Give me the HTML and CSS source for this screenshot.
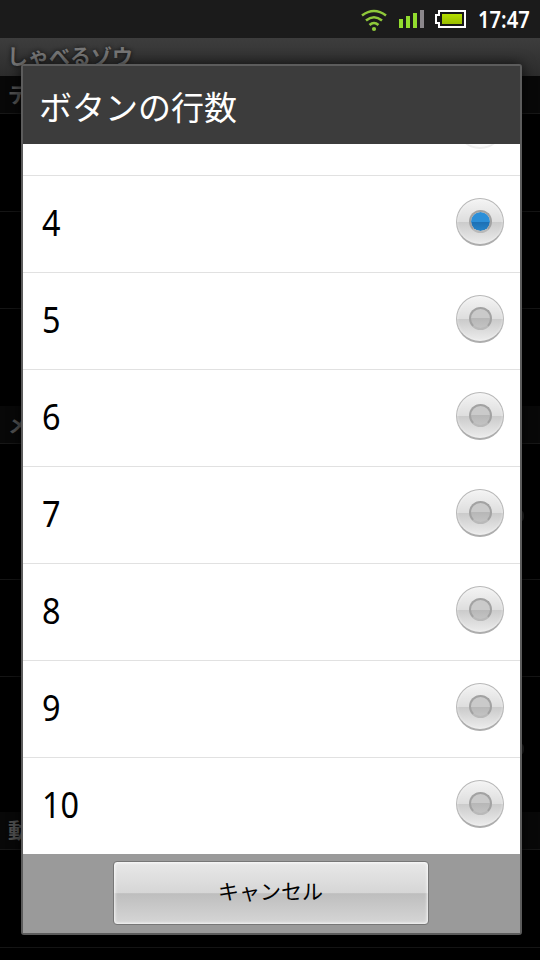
FILE: index.html
```html
<!DOCTYPE html>
<html lang="ja">
<head>
<meta charset="utf-8">
<title>しゃべるゾウ</title>
<link rel="stylesheet" href="styles.css">
</head>
<body>
<div class="screen">
  <header class="status">
    <svg class="wifi" width="28" height="24" viewBox="0 0 28 24" fill="none" stroke="#8fc93a" stroke-width="2.6">
      <path d="M2 6.5Q14 -2.500 26 6.500M6 11.500Q14 5 22 11.500M9.500 16Q14 12 18.500 16"/>
      <circle cx="14" cy="20" r="2.100" fill="#8fc93a" stroke="none"/>
    </svg>
    <svg class="signal" width="26" height="18" viewBox="0 0 26 18">
      <path fill="#92dc2e" d="M0 9h4v9H0zM7 6h4v12H7zM14 3h4v15h-4z"/>
      <path fill="#8b878b" d="M21 0h4v18h-4z"/>
    </svg>
    <svg class="battery" width="31" height="18" viewBox="0 0 31 18">
      <defs><linearGradient id="charge" x2="0" y2="1"><stop stop-color="#b5df00"/><stop offset="1" stop-color="#9abc00"/></linearGradient></defs>
      <path d="M4 1H30V17H4V13H1V5H4Z" fill="#171717" stroke="#fff" stroke-width="2"/>
      <path d="M7 4h20v10H7z" fill="url(#charge)"/>
    </svg>
    <span class="clock">17:47</span>
  </header>
  <div class="app-title">しゃべるゾウ</div>
  <main class="settings">
    <h2 class="section">デ</h2>
    <div class="pref"></div>
    <div class="pref"></div>
    <div class="pref last"></div>
    <h2 class="section">メ</h2>
    <div class="pref tall more"></div>
    <div class="pref"></div>
    <div class="pref tall more last"></div>
    <h2 class="section">動</h2>
    <div class="pref"></div>
  </main>
  <section class="dialog">
    <h1 class="dialog-title">ボタンの行数</h1>
    <div class="options">
      <div class="option"><span></span><i class="radio faded"></i></div>
      <div class="option"><span>4</span><i class="radio checked"></i></div>
      <div class="option"><span>5</span><i class="radio"></i></div>
      <div class="option"><span>6</span><i class="radio"></i></div>
      <div class="option"><span>7</span><i class="radio"></i></div>
      <div class="option"><span>8</span><i class="radio"></i></div>
      <div class="option"><span>9</span><i class="radio"></i></div>
      <div class="option"><span>10</span><i class="radio"></i></div>
    </div>
    <footer class="actions"><button class="cancel">キャンセル</button></footer>
  </section>
</div>
</body>
</html>
```
FILE: styles.css
```css
*, *::before, *::after { box-sizing: border-box; }
body { margin: 0; background: #000; font-family: "Noto Sans CJK JP", sans-serif; }
.screen { position: relative; width: 540px; height: 960px; overflow: hidden; background: #000; }

.status { display: flex; align-items: center; justify-content: flex-end; height: 38px; padding-right: 10px; background: #1b1b1b; color: #fff; }
.wifi { margin: 3px 11px 0 0; }
.signal { margin-right: 10px; }
.battery { margin-right: 12px; }
.clock { width: 52px; font-family: "Noto Sans", sans-serif; font-size: 24px; line-height: 38px; font-weight: 600; transform: scaleX(.84); transform-origin: left; white-space: nowrap; }

.app-title { height: 38px; padding-left: 7px; background: linear-gradient(#3d3d3d, #2c2c2c); color: #777; font-size: 21px; font-weight: 600; line-height: 34px; text-shadow: 0 0 4px #111; }
.section { height: 38px; margin: 0; padding-left: 8px; border-bottom: 1px solid #171717; background: #080808; color: #505050; font-size: 21px; font-weight: 700; line-height: 34px; }
.pref { position: relative; height: 97px; border-bottom: 1px solid #151515; }
.section + .pref { height: 98px; }
.pref.tall { height: 135px; }
.section + .pref.tall { height: 136px; }
.pref.last { border-bottom: 0; }
.more::after { content: ""; position: absolute; right: 16px; top: 67px; width: 5px; height: 10px; border-radius: 50%; background: #202020; }

.dialog { position: absolute; left: 21px; top: 64px; display: flex; flex-direction: column; width: 501px; height: 871px; border: 2px solid #5c5c5c; border-radius: 3px; box-shadow: 0 0 14px rgba(0, 0, 0, .75); }
.dialog-title { height: 78px; margin: 0; padding-left: 16px; background: #3c3c3c; color: #fff; font-size: 33px; font-weight: 400; line-height: 81px; }
.options { display: flex; flex-direction: column; justify-content: flex-end; height: 710px; overflow: hidden; background: #fff; }
.option { display: flex; flex: none; align-items: center; justify-content: space-between; height: 97px; padding: 0 16px 4px 19px; border-bottom: 1px solid #e1e1e1; color: #000; font-family: "Noto Sans", sans-serif; font-size: 36px; line-height: 92px; }
.option:last-child { height: 96px; border-bottom: 0; }
.option span { padding-top: 2px; line-height: 90px; transform: scaleX(.9); transform-origin: left; }

.radio { display: flex; align-items: center; justify-content: center; width: 48px; height: 48px; border: 1px solid #b8b8b8; border-bottom: 2px solid #adadad; border-radius: 50%; background: linear-gradient(#f4f4f4, #dedede 50%, #cbcbcb 52%, #ececec); box-shadow: inset 0 0 3px rgba(255, 255, 255, .6); }
.radio::before { content: ""; width: 23px; height: 23px; border: 2px solid #a2a2a2; border-bottom-color: #b9b9b9; border-radius: 50%; background: linear-gradient(#cacaca 50%, #b7b7b7 50%, #c3c3c3); }
.radio.checked::before { background: linear-gradient(#2c8fd8 53%, #1d70b4 53%, #2784c8) padding-box; }
.radio.faded { opacity: .2; }

.actions { display: flex; justify-content: center; height: 79px; padding-top: 7px; background: #9a9a9a; }
.cancel { width: 316px; height: 64px; margin-right: 2px; padding: 0 0 5px; border: 1px solid #777; border-radius: 4px; background: linear-gradient(#e8e8e8, #d6d6d6 50%, #bebebe 51%, #d6d6d6); box-shadow: inset 0 0 3px 1px rgba(255, 255, 255, .8); color: #000; font: 21px/1 "Noto Sans CJK JP", sans-serif; }
```
